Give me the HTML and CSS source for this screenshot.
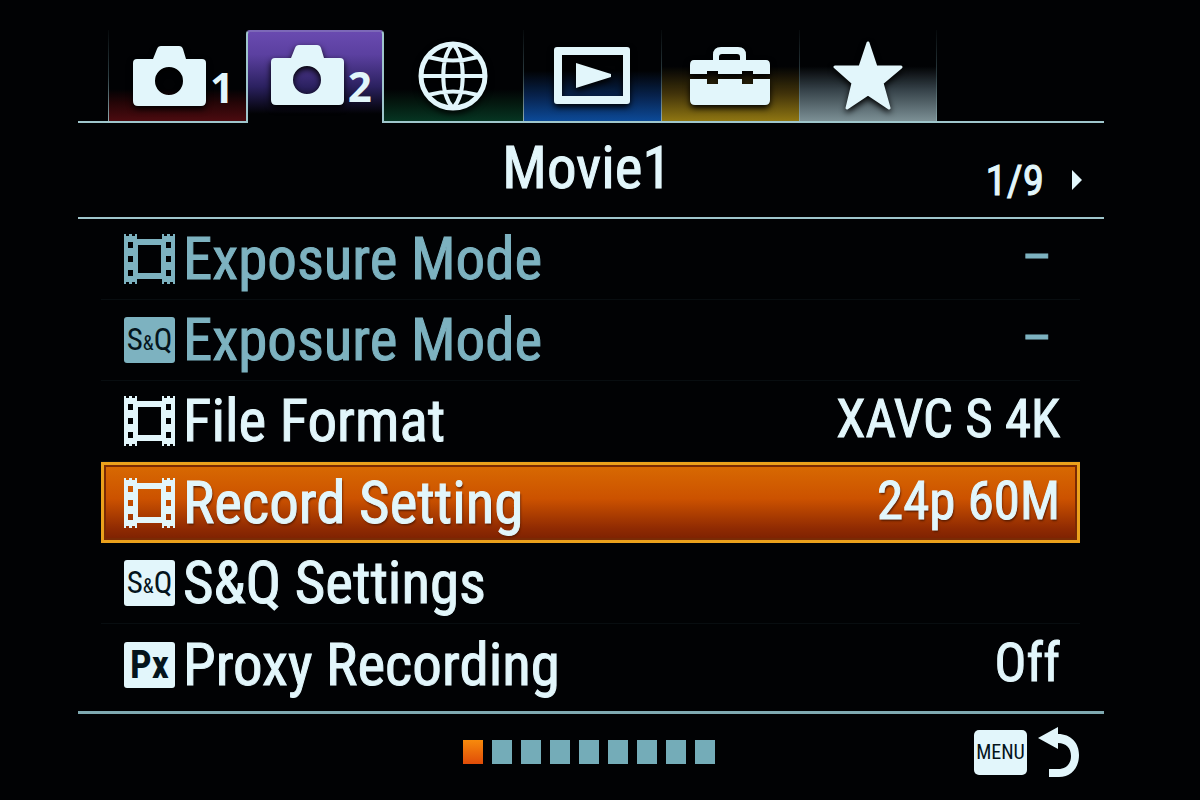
FILE: index.html
```html
<!DOCTYPE html>
<html lang="en">
<head>
    <meta charset="UTF-8">
    <meta name="viewport" content="width=device-width, initial-scale=1.0">
    <title>Movie1</title>
    <link rel="stylesheet" href="styles.css">
</head>
<body>
    <!-- Shared symbols -->
    <svg class="symbols" aria-hidden="true">
        <symbol id="camera" viewBox="0 0 73 60">
            <path fill-rule="evenodd" d="M4 13H20L24 3Q25 0 28 0H46Q49 0 50 3L53 13H69Q73 13 73 17V55Q73 60 68 60H5Q0 60 0 55V17Q0 13 4 13ZM36 21A14 14 0 1 0 36 49A14 14 0 1 0 36 21Z"/>
        </symbol>
        <symbol id="film" viewBox="0 0 51 50">
            <path fill-rule="evenodd" d="M0 0H2V2H5V0H8V2H11V0H13V5H38V0H40V2H43V0H46V2H49V0H51V50H49V48H46V50H43V48H40V50H38V45H13V50H11V48H8V50H5V48H2V50H0ZM14 11V39H37V11ZM4 8V14H9V8ZM4 22V28H9V22ZM4 36V42H9V36ZM42 8V14H47V8ZM42 22V28H47V22ZM42 36V42H47V36Z"/>
        </symbol>
    </svg>

    <div class="screen">
        <nav class="tabs">
            <button class="tab tab-red" type="button" aria-label="Camera 1">
                <svg class="icon-camera"><use href="#camera"/></svg>
                <span class="tab-number">1</span>
            </button>
            <button class="tab active" type="button" aria-label="Camera 2">
                <svg class="icon-camera"><use href="#camera"/></svg>
                <span class="tab-number">2</span>
            </button>
            <button class="tab tab-green" type="button" aria-label="Network">
                <svg class="icon-globe" viewBox="0 0 70 70">
                    <g fill="none" stroke="currentColor" stroke-width="4">
                        <circle cx="35" cy="35" r="32" stroke-width="5"/>
                        <path d="M35 3C22 17 22 53 35 67M35 3C48 17 48 53 35 67M3 35H67M10 16Q35 23 60 16M10 54Q35 47 60 54"/>
                    </g>
                </svg>
            </button>
            <button class="tab tab-blue" type="button" aria-label="Playback">
                <svg class="icon-play" viewBox="0 0 76 57">
                    <path fill-rule="evenodd" d="M3 0H73Q76 0 76 3V54Q76 57 73 57H3Q0 57 0 54V3Q0 0 3 0ZM8 8V49H69V8ZM22 16L57 27V30L22 41Z"/>
                </svg>
            </button>
            <button class="tab tab-yellow" type="button" aria-label="Setup">
                <svg class="icon-toolbox" viewBox="0 0 80 58">
                    <path fill-rule="evenodd" d="M4 13H23V8Q23 0 31 0H48Q56 0 56 8V13H76Q80 13 80 18V27H63V24H52V27H28V24H17V27H0V18Q0 13 4 13ZM29 13H50V10Q50 7 47 7H32Q29 7 29 10Z"/>
                    <path d="M0 32H17V37H28V32H52V37H63V32H80V53Q80 58 75 58H5Q0 58 0 53Z"/>
                </svg>
            </button>
            <button class="tab tab-gray" type="button" aria-label="My Menu">
                <svg class="icon-star" viewBox="0 0 70 70">
                    <path stroke="currentColor" stroke-width="3" stroke-linejoin="round" d="M35 2L43 26H68L49 42L56 67L35 53L14 67L20 42L2 26H27Z"/>
                </svg>
            </button>
        </nav>

        <header class="title-bar">
            <h1>Movie1</h1>
            <div class="page-count">
                <span>1/9</span>
                <svg class="icon-next" viewBox="0 0 10 20"><path d="M0 0L10 10L0 20Z"/></svg>
            </div>
        </header>

        <main class="menu">
            <button class="row disabled" type="button" disabled>
                <svg class="icon-film"><use href="#film"/></svg>
                <span class="name">Exposure Mode</span>
                <span class="value">–</span>
            </button>
            <button class="row disabled" type="button" disabled>
                <span class="badge">S<small>&amp;</small>Q</span>
                <span class="name">Exposure Mode</span>
                <span class="value">–</span>
            </button>
            <button class="row" type="button">
                <svg class="icon-film"><use href="#film"/></svg>
                <span class="name">File Format</span>
                <span class="value">XAVC S 4K</span>
            </button>
            <button class="row selected" type="button">
                <svg class="icon-film"><use href="#film"/></svg>
                <span class="name">Record Setting</span>
                <span class="value">24p 60M</span>
            </button>
            <button class="row" type="button">
                <span class="badge">S<small>&amp;</small>Q</span>
                <span class="name">S&amp;Q Settings</span>
            </button>
            <button class="row" type="button">
                <span class="badge badge-px">Px</span>
                <span class="name">Proxy Recording</span>
                <span class="value">Off</span>
            </button>
        </main>

        <footer class="footer">
            <div class="pages">
                <span class="page current"></span>
                <span class="page"></span>
                <span class="page"></span>
                <span class="page"></span>
                <span class="page"></span>
                <span class="page"></span>
                <span class="page"></span>
                <span class="page"></span>
                <span class="page"></span>
            </div>
            <button class="back" type="button" aria-label="MENU back">
                <span class="menu-key">MENU</span>
                <svg class="icon-return" viewBox="0 0 41 50">
                    <path d="M0 11L20 0V7C33 7 41 16 41 28C41 41 33 50 21 50H11V42H20C28 42 33 37 33 29C33 21 28 16 20 16V22Z"/>
                </svg>
            </button>
        </footer>
    </div>
</body>
</html>
```
FILE: styles.css
```css
* {
    box-sizing: border-box;
}
body {
    margin: 0;
    background: #010204;
    color: #e2f6fb;
    font-family: "Roboto Condensed", "Liberation Sans Narrow", "Arial Narrow", "Liberation Sans", sans-serif;
}
button {
    margin: 0;
    padding: 0;
    border: 0;
    background: none;
    color: inherit;
    font: inherit;
}
svg {
    display: block;
    flex: none;
    fill: currentColor;
}
.symbols {
    position: absolute;
    width: 0;
    height: 0;
}
.screen {
    margin: 0 8% 0 6.5%;
    padding-top: 30px;
}

/* Tabs */
.tabs {
    display: grid;
    grid-template-columns: repeat(6, 1fr);
    height: 93px;
    padding: 0 167px 0 30px;
    border-bottom: 2px solid #9fc6cc;
}
.tab {
    display: flex;
    align-items: center;
    justify-content: center;
    border-left: 1px solid;
    border-image: linear-gradient(#05080a, #2c3d42 50%, #8fabb0) 1;
}
.tab svg {
    filter: drop-shadow(0 3px 3px #000);
}
.tab-red {
    padding-left: 12px;
    background: linear-gradient(transparent 65%, #250507 80%, #4c0b10);
}
.tab-green {
    border-left: 0;
    background: linear-gradient(transparent 65%, #04180f 80%, #063522);
}
.tab-blue {
    background: linear-gradient(transparent 45%, #082654 75%, #0c4a98);
}
.tab-yellow {
    background: linear-gradient(transparent 40%, #41330a 70%, #8f7612);
}
.tab-gray {
    border-right: 1px solid;
    background: linear-gradient(transparent 40%, #344047 65%, #7c9095);
}
.tab.active {
    margin-bottom: -2px;
    padding: 0 0 5px 12px;
    border: 2px solid #9fc6cc;
    border-bottom: 0;
    border-top-color: #7c68b8;
    border-image: none;
    border-radius: 4px 4px 0 0;
    background: linear-gradient(#694ab0, #5b40a0 25%, #2b2160 60%, #010204 90%);
}
.tab-number {
    margin-top: 22px;
    padding-left: 4px;
    font: bold 42px/50px "Open Sans", "Noto Sans", sans-serif;
}
.icon-camera {
    width: 73px;
    height: 60px;
}
.icon-globe,
.icon-star {
    width: 70px;
    height: 70px;
}
.icon-play {
    width: 76px;
    height: 57px;
}
.icon-toolbox {
    width: 80px;
    height: 58px;
}

/* Title */
.title-bar {
    display: grid;
    grid-template-columns: 1fr auto 1fr;
    height: 96px;
    padding: 0 22px 0 14px;
    border-bottom: 2px solid #9fc6cc;
    -webkit-text-stroke: 1px;
}
.title-bar h1 {
    grid-column: 2;
    margin: 0;
    font-size: 59px;
    font-weight: normal;
    line-height: 90px;
}
.page-count {
    display: flex;
    align-items: center;
    justify-content: flex-end;
    gap: 28px;
    padding-top: 20px;
    font-size: 43px;
    line-height: 70px;
}
.icon-next {
    width: 10px;
    height: 20px;
}

/* Menu rows */
.menu {
    padding: 0 24px 6px 23px;
    border-bottom: 3px solid #7fa9b1;
}
.row {
    display: flex;
    align-items: center;
    gap: 8px;
    width: 100%;
    height: 81px;
    padding: 0 20px 0 23px;
    border-bottom: 1px solid #080d10;
    text-align: left;
    white-space: nowrap;
}
.row:last-child {
    border-bottom: 0;
}
.row.disabled {
    color: #7db2c0;
}
.row.selected {
    border: 3px solid #eba11c;
    padding: 0 17px 0 20px;
    background: linear-gradient(#d86a02, #cc5200 45%, #8f2a02 85%, #7c2102);
    box-shadow: inset 0 0 0 2px #7a2a04;
    text-shadow: 1px 2px 2px #5a1c00;
}
.name {
    flex: 1;
    font-size: 59px;
    line-height: 72px;
    -webkit-text-stroke: 1px;
}
.value {
    padding-bottom: 4px;
    font-size: 53px;
    line-height: 72px;
    -webkit-text-stroke: 1px;
}
.disabled .value {
    padding-right: 8px;
}
.icon-film {
    width: 51px;
    height: 50px;
}
.badge {
    display: flex;
    flex: none;
    align-items: baseline;
    justify-content: center;
    width: 51px;
    height: 46px;
    border-radius: 3px;
    background: #e2f6fb;
    color: #04141c;
    font-size: 31px;
    line-height: 46px;
}
.badge small {
    font-size: 20px;
}
.disabled .badge {
    background: #7db2c0;
}
.badge-px {
    font-size: 38px;
    font-weight: bold;
}

/* Footer */
.footer {
    display: grid;
    grid-template-columns: 1fr auto 1fr;
    align-items: center;
    height: 76px;
    padding: 0 25px 0 20px;
}
.pages {
    display: flex;
    grid-column: 2;
    gap: 9px;
}
.page {
    width: 20px;
    height: 24px;
    background: #74acb8;
}
.page.current {
    background: linear-gradient(#f78a0c, #e04c08);
}
.back {
    display: flex;
    align-items: center;
    justify-self: end;
    gap: 11px;
}
.menu-key {
    width: 53px;
    border-radius: 5px;
    background: #e2f6fb;
    color: #04141c;
    font-size: 20px;
    line-height: 45px;
    text-align: center;
}
.icon-return {
    width: 41px;
    height: 50px;
}
```
